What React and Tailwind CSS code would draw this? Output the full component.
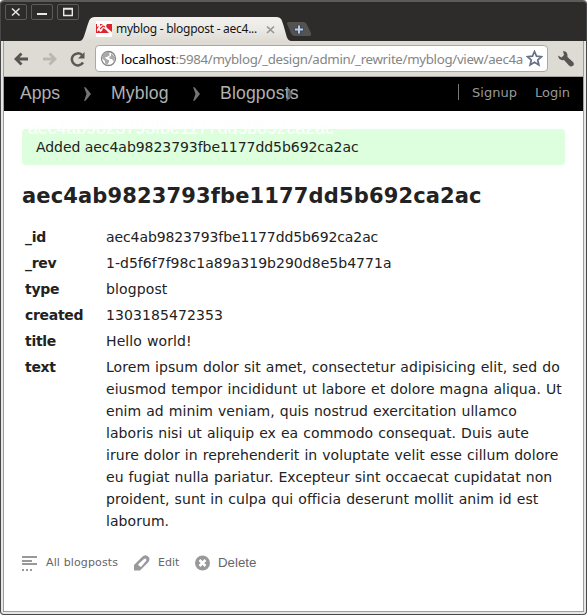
import React from "react";

const rows = [
  ["_id", "tracking-[-0.1px]", ["aec4ab9823793fbe1177dd5b692ca2ac"]],
  ["_rev", "tracking-[0.03px]", ["1-d5f6f7f98c1a89a319b290d8e5b4771a"]],
  ["type", "tracking-[0.12px]", ["blogpost"]],
  ["created", "tracking-[0.1px]", ["1303185472353"]],
  ["title", "tracking-[0.1px]", ["Hello world!"]],
  ["text", "tracking-[0.055px]", [
    "Lorem ipsum dolor sit amet, consectetur adipisicing elit, sed do",
    "eiusmod tempor incididunt ut labore et dolore magna aliqua. Ut",
    "enim ad minim veniam, quis nostrud exercitation ullamco",
    "laboris nisi ut aliquip ex ea commodo consequat. Duis aute",
    "irure dolor in reprehenderit in voluptate velit esse cillum dolore",
    "eu fugiat nulla pariatur. Excepteur sint occaecat cupidatat non",
    "proident, sunt in culpa qui officia deserunt mollit anim id est",
    "laborum.",
  ]],
];

function WindowButton({ children }) {
  return (
    <div className="h-4 w-[22px] rounded-[2px] border border-[#5c5b58] bg-[#2d2c2a]">
      <svg width="20" height="14" viewBox="0 0 20 14" fill="none" stroke="#e8e8e6">{children}</svg>
    </div>
  );
}

function Arrow({ className }) {
  return (
    <svg className={className} width="8" height="14" viewBox="0 0 8 14" fill="#747474">
      <path d="M0 0 Q2 0 3 2 L7 7 L3 12 Q2 14 0 14 L2.500 7Z" />
    </svg>
  );
}

function TitleBar() {
  return (
    <div className="relative h-[41px] shrink-0 rounded-t-[3px] border-t-2 border-[#5b5b5a] bg-[#2d2c2a]">
      <div className="flex gap-1 pl-[4px] pt-[2px]">
        <WindowButton><path d="M6 3.500l7.500 7m0-7l-7.500 7" strokeWidth="1.500" /></WindowButton>
        <WindowButton><path d="M5 9h10" strokeWidth="2" /></WindowButton>
        <WindowButton><path d="M5.700 3.500h8.600v7H5.700zM5 4h10" strokeWidth="1.400" /></WindowButton>
      </div>
      <svg className="absolute left-[79px] top-[15px]" width="234" height="24" viewBox="0 0 234 24">
        <defs>
          <linearGradient id="tab" x2="0" y2="1">
            <stop stopColor="#f2f0ed" />
            <stop offset=".5" stopColor="#eceae6" />
            <stop offset="1" stopColor="#dfdad4" />
          </linearGradient>
        </defs>
        <path d="M0 24 C4 23 4 18 9 4 Q10.500 0 15 0 H196 Q201 0 202 4 C207 18 206 23 211 24Z" fill="url(#tab)" />
        <path d="M208 5h15q3 0 4 3l4 8q1 3-2 3h-14q-3 0-4-3l-4-9q0-2 1-2z" fill="#545352" />
        <path d="M219 8v9m-4.500-4.500h9" stroke="#2d4868" strokeWidth="4" />
        <path d="M219 8.500v8m-4-4h8" stroke="#c4cbd5" strokeWidth="2" />
        <path d="M187 9.500l7 6.500m0-6.500l-7 6.500" stroke="#989692" strokeWidth="1.700" />
      </svg>
      <div className="absolute left-[95px] top-[19px] flex items-center">
        <svg width="16" height="16" viewBox="0 0 16 16">
          <path fill="#fff" d="M0 0h16v16H0z" />
          <path fill="#e1242c" d="M0 3h16v9H0z" />
          <path d="M1 3h3v2l3-2h4l-1 2 1 2 5 4v1h-3L9 8 7 7l-1 3-2 1-1-2-2 2V8l1-1 1-2-2 1z" fill="#fff" />
          <path d="M4 8l3-3 2 1" stroke="#e1242c" strokeWidth="1.200" fill="none" />
        </svg>
        <span className="ml-1 whitespace-nowrap font-['Noto_Sans','Open_Sans',sans-serif] text-[12px] leading-4 tracking-[-0.27px] text-[#151515]">myblog - blogpost - aec4...</span>
      </div>
    </div>
  );
}

function Toolbar() {
  return (
    <div className="flex h-9 shrink-0 items-center border-b border-[#a7a39e] bg-[#dedad4] pl-[9px]">
      <svg width="17" height="16" viewBox="0 0 17 16" fill="none" stroke="#555451" strokeWidth="2.800"><path d="M15 8H3m5.500-5.500L3 8l5.500 5.500" /></svg>
      <svg className="ml-[12px]" width="17" height="16" viewBox="0 0 17 16" fill="none" stroke="#bbb8b2" strokeWidth="2.800"><path d="M1 8h12M7.500 2.500L13 8l-5.500 5.500" /></svg>
      <svg className="ml-[10px]" width="18" height="16" viewBox="0 0 18 16" fill="none" stroke="#5b5956" strokeWidth="2.500"><path d="M14 11.500A6 6 0 1 1 13 4" /><path d="M15.500 1v6.500H9z" fill="#5b5956" stroke="none" /></svg>
      <div className="ml-[8px] flex h-[27px] w-[453px] items-center rounded-[4px] border border-[#aaa8a5] bg-white pl-[4px]">
        <svg width="17" height="17" viewBox="0 0 17 17">
          <circle cx="8.500" cy="8.500" r="7" fill="#fff" stroke="#858583" strokeWidth="1.300" />
          <path fill="#aaa" d="M3 4l3-2 4 0-1 2 1 1-3 2-2 0 1 2 3 1 0 2-2 3-2-2 0-2-3-3zM11 3l4 4-1 5-2-3-2 0-1-2 2-1z" />
        </svg>
        <span className="ml-[4px] w-[405px] shrink-0 whitespace-nowrap font-['Noto_Sans','Open_Sans',sans-serif] text-[13.300px] leading-5 tracking-[-0.32px] text-[#858585]"><span className="tracking-[-0.2px] text-black">localhost</span>:5984/myblog/_design/admin/_rewrite/myblog/view/aec4a</span>
        <svg className="shrink-0" width="17" height="17" viewBox="0 0 17 17" fill="#fff" stroke="#667087" strokeWidth="1.700"><path d="M8.500 1.500l2 4.700 5 .5-3.800 3.300 1.200 5-4.400-2.700L4.100 15l1.200-5L1.500 6.700l5-.5z" /></svg>
      </div>
      <svg className="ml-[9px]" width="18" height="18" viewBox="0 0 18 18"><path d="M6 1Q11 1 10.500 7L16.500 12.500Q17.500 15 15.500 16T12 15.500L7 10Q2 11 1 5.500L4.500 7.500L7 5Z" fill="#565552" /></svg>
    </div>
  );
}

function Nav() {
  return (
    <nav className="relative flex h-[34px] shrink-0 bg-black pl-4 font-['Liberation_Sans',Arial,sans-serif] text-[17.600px] leading-[33px] text-[#b0b0b0]">
      <span className="w-[64px]">Apps</span>
      <Arrow className="mt-[10px]" />
      <span className="ml-[19px] w-[82px] tracking-[0.15px]">Myblog</span>
      <Arrow className="mt-[10px]" />
      <span className="ml-[19px] whitespace-nowrap tracking-[0.15px]">Blogposts</span>
      <Arrow className="absolute left-[282px] top-[10px] opacity-70" />
      <div className="ml-auto mr-[13px] mt-[7px] flex h-4 border-l border-[#777] pl-[13px] font-['DejaVu_Sans',Verdana,sans-serif] text-[13px] leading-[17px] text-[#999]">
        <span>Signup</span>
        <span className="ml-[18px]">Login</span>
      </div>
    </nav>
  );
}

export default function App() {
  return (
    <div className="flex h-[615px] w-[587px] flex-col overflow-hidden rounded-[4px] border-b border-l border-r border-[#484848] bg-[#e8e6e3] font-['DejaVu_Sans',Verdana,sans-serif] text-[#222]">
      <TitleBar />
      <div className="mx-[2px] mb-[2px] flex min-h-0 flex-1 flex-col border-b border-l border-r border-[#a09e9a] bg-white">
        <Toolbar />
        <Nav />
        <main className="relative px-[18px] pt-[18px] text-[14px]">
          <div className="relative h-9 rounded-[4px] bg-[#ddffdd] pl-[14px] leading-9">
            <span className="tracking-[-0.05px]">Added aec4ab9823793fbe1177dd5b692ca2ac</span>
            <span className="absolute -top-[11px] left-[6px] whitespace-nowrap font-['Liberation_Sans',Arial,sans-serif] text-[17.600px] leading-5 tracking-[0.06px] text-[#fdfffd]">aec4ab9823793fbe1177dd5b692ca2ac</span>
          </div>
          <h1 className="mt-[15px] whitespace-nowrap text-[21px] font-bold leading-8 tracking-[0.14px]">aec4ab9823793fbe1177dd5b692ca2ac</h1>
          <dl className="mt-[14px] pl-[3px]">
            {rows.map(([name, tracking, lines]) => (
              <div key={name} className="mb-1 flex leading-[22px]">
                <dt className="w-[81px] shrink-0 font-bold tracking-[-0.3px]">{name}</dt>
                <dd className={`whitespace-nowrap [word-spacing:0.5px] ${tracking}`}>{lines.map((line) => <div key={line}>{line}</div>)}</dd>
              </div>
            ))}
          </dl>
          <footer className="mt-[21px] flex h-5 items-center text-[11px] text-[#666]">
            <svg width="16" height="16" viewBox="0 0 16 16" fill="#999"><path d="M0 1h15v2H0zM0 5h10v2H0zM0 8h15v2H0zM0 14h2v2H0zM4 14h2v2H4zM8 14h2v2H8z" /></svg>
            <span className="ml-2 w-[88px] whitespace-nowrap tracking-[0.13px]">All blogposts</span>
            <svg width="16" height="16" viewBox="0 0 16 16"><path fill="#999" fillRule="evenodd" d="M8 2Q11-1 13.500 1l1 1q2 2 0 5L6 15.500H0V10zM5 8.500L4 10l3 2 5-6q1-1 0-2t-2 0z" /></svg>
            <span className="ml-2 w-[37px]">Edit</span>
            <svg width="16" height="16" viewBox="0 0 16 16"><circle cx="7.500" cy="8" r="7.500" fill="#999" /><path d="M4.500 5l6 6m0-6l-6 6" stroke="#fff" strokeWidth="2.500" /></svg>
            <span className="ml-[7px] font-['Liberation_Sans',Arial,sans-serif] text-[13.300px]">Delete</span>
          </footer>
        </main>
      </div>
    </div>
  );
}
